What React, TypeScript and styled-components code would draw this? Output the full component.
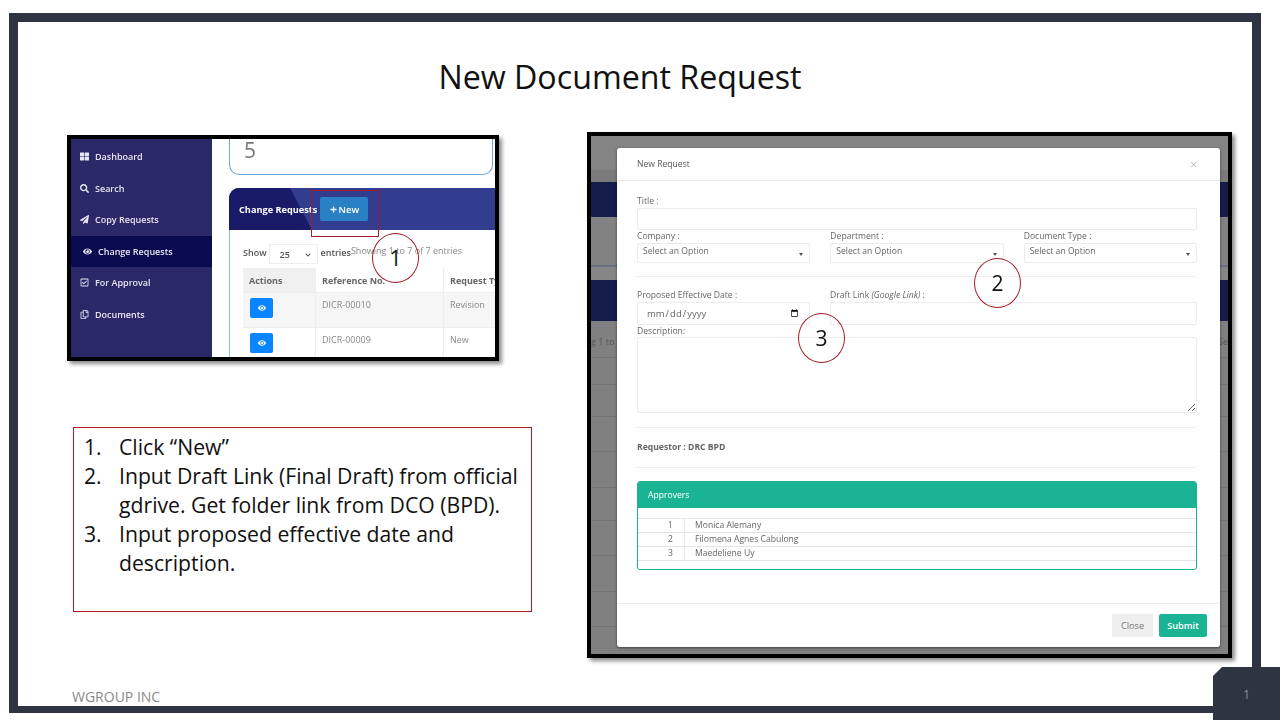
import { createGlobalStyle } from 'styled-components';
import styled from 'styled-components';
import { FaThLarge, FaSearch, FaPaperPlane, FaEye, FaRegCheckSquare, FaRegCopy, FaPlus, FaChevronDown } from 'react-icons/fa';

const GlobalStyle = createGlobalStyle`
    html, body {
        margin: 0;
        padding: 0;
        background: #fff;
    }
    * {
        box-sizing: border-box;
    }
`;

const Page = styled.div`
    width: 1280px;
    height: 720px;
    position: relative;
    overflow: hidden;
    background: #fff;
    padding: 13px 19px 7px 9px;
    font-family: "Open Sans", "Liberation Sans", sans-serif;
`;

const Frame = styled.div`
    height: 100%;
    border: solid #2f3443;
    border-width: 9px 9px 7px 9px;
    display: flex;
    flex-direction: column;
`;

const Title = styled.h1`
    height: 110px;
    margin: 0;
    padding: 36px 30px 0 0;
    text-align: center;
    font-size: 32.2px;
    line-height: 38px;
    font-weight: 400;
    color: #111;
`;

const Body = styled.div`
    display: flex;
    padding-left: 49px;
    gap: 56px;
`;

const LeftColumn = styled.div`
    width: 464px;
    padding-top: 3px;
`;

const Shot = styled.div`
    border: 4px solid #000;
    box-shadow: 3px 3px 4px rgba(0, 0, 0, 0.45);
    overflow: hidden;
    position: relative;
`;

const AppShot = styled(Shot)`
    width: 432px;
    height: 226px;
    display: flex;
    filter: blur(0.3px);
`;

const Sidebar = styled.nav`
    width: 141px;
    flex: none;
    background: #2b2868;
    padding-top: 2px;
`;

const NavItem = styled.div<{ $active?: boolean; $indent: number }>`
    height: 31.5px;
    display: flex;
    align-items: center;
    gap: 6px;
    padding-left: ${(p) => p.$indent}px;
    background: ${(p) => (p.$active ? '#0a0a50' : 'transparent')};
    color: #e6e6f2;
    font-size: 9px;
    font-weight: 600;
    svg {
        width: 9px;
        height: 9px;
        flex: none;
    }
`;

const AppMain = styled.div`
    flex: 1;
    min-width: 0;
    overflow: hidden;
    background: #fff;
    padding-left: 17px;
`;

const CountCard = styled.div`
    width: 264px;
    height: 36px;
    border: 1px solid #6aa9dd;
    border-top: none;
    border-radius: 0 0 10px 10px;
    padding-left: 14px;
    font-size: 21px;
    line-height: 23px;
    color: #777;
`;

const ListCard = styled.div`
    width: 300px;
    margin-top: 13px;
    border: 1px solid #8dbce4;
    border-radius: 10px 10px 0 0;
    height: 200px;
`;

const ListHeader = styled.div`
    height: 42px;
    margin: -1px -1px 0;
    background: #333d8f;
    border-radius: 10px 0 0 0;
    display: flex;
    align-items: center;
    padding-left: 10px;
    gap: 3px;
    position: relative;
    overflow: hidden;
    color: #fff;
    font-size: 9.2px;
    font-weight: 700;
    &::before {
        content: '';
        position: absolute;
        left: 0;
        top: 0;
        width: 83px;
        height: 100%;
        background: #191a68;
        clip-path: polygon(0 0, 61px 0, 83px 100%, 0 100%);
    }
    span, button {
        position: relative;
    }
`;

const NewButton = styled.button`
    width: 48px;
    height: 24px;
    border: none;
    border-radius: 2px;
    background: #2a80c4;
    color: #fff;
    font-family: inherit;
    font-size: 9.5px;
    font-weight: 600;
    padding: 0;
    display: flex;
    align-items: center;
    justify-content: center;
    gap: 2px;
    svg {
        width: 7px;
        height: 7px;
    }
`;

const ListBody = styled.div`
    padding: 14px 0 0 13px;
`;

const ShowRow = styled.div`
    height: 24px;
    display: flex;
    align-items: flex-start;
    font-size: 9px;
    font-weight: 600;
    color: #555;
    line-height: 18px;
`;

const EntriesSelect = styled.div`
    width: 49px;
    height: 20px;
    margin: 0 3px 0 2px;
    border: 1px solid #eee;
    padding: 2px 6px 0 10px;
    display: flex;
    justify-content: space-between;
    align-items: center;
    svg {
        width: 6px;
        height: 6px;
    }
`;

const ShowingText = styled.span`
    font-weight: 400;
    color: #888;
    line-height: 14px;
`;

const TableRow = styled.div<{ $height: number; $shade?: boolean }>`
    height: ${(p) => p.$height}px;
    display: grid;
    grid-template-columns: 73px 128px 1fr;
    background: ${(p) => (p.$shade ? '#f6f6f6' : '#fff')};
    border-bottom: 1px solid #eee;
    font-size: 9px;
    color: #888;
`;

const HeadCell = styled.div<{ $shade?: boolean }>`
    padding: 6px 0 0 6px;
    font-weight: 700;
    color: #666;
    white-space: nowrap;
    background: ${(p) => (p.$shade ? '#f0f0f0' : 'transparent')};
    border-right: 1px solid #eee;
`;

const Cell = styled.div`
    padding: 5px 0 0 6px;
    border-right: 1px solid #eee;
`;

const EyeButton = styled.span`
    width: 23px;
    height: 20px;
    margin-left: 1px;
    border-radius: 2px;
    background: #0a84ff;
    color: #fff;
    display: flex;
    align-items: center;
    justify-content: center;
    svg {
        width: 8px;
        height: 8px;
    }
`;

const StepBox = styled.div`
    width: 459px;
    height: 185px;
    margin: 66px 0 0 6px;
    border: 1px solid #a81c22;
    padding: 4px 0 0 10px;
    font-size: 21.2px;
    line-height: 29px;
    color: #111;
`;

const Step = styled.div`
    display: flex;
`;

const StepNumber = styled.span`
    width: 35px;
    flex: none;
`;

const ModalShot = styled(Shot)`
    width: 645px;
    height: 526px;
    background: #808080;
`;

const Backdrop = styled.div`
    height: 100%;
    filter: blur(0.4px);
    font-size: 9px;
    color: #555;
`;

const Band = styled.div<{ $height: number; $color: string }>`
    height: ${(p) => p.$height}px;
    background: ${(p) => p.$color};
`;

const BackdropRow = styled.div<{ $height: number }>`
    height: ${(p) => p.$height}px;
    border-bottom: 1px solid #747474;
    display: flex;
    justify-content: space-between;
    padding-top: 14px;
    white-space: nowrap;
`;

const Modal = styled.div`
    position: absolute;
    left: 26px;
    top: 12px;
    width: 603px;
    height: 499px;
    background: #fff;
    border-radius: 3px;
    box-shadow: 0 1px 3px rgba(0, 0, 0, 0.5);
    color: #666;
    font-size: 8.6px;
    display: flex;
    flex-direction: column;
    filter: blur(0.25px);
`;

const ModalHeader = styled.div`
    height: 33px;
    flex: none;
    border-bottom: 1px solid #ececec;
    padding: 0 23px 0 20px;
    display: flex;
    align-items: center;
    justify-content: space-between;
    color: #555;
`;

const CloseMark = styled.span`
    font-size: 12px;
    color: #bbb;
`;

const ModalBody = styled.div`
    flex: 1;
    padding: 14px 23px 0 20px;
`;

const Label = styled.div`
    height: 13px;
    line-height: 13px;
    white-space: nowrap;
`;

const DescriptionLabel = styled(Label)`
    height: 12px;
    line-height: 12px;
`;

const TextInput = styled.input`
    display: block;
    width: 100%;
    height: 22px;
    border: 1px solid #ececec;
    border-radius: 2px;
    background: #fff;
`;

const Columns = styled.div<{ $columns: string }>`
    display: grid;
    grid-template-columns: ${(p) => p.$columns};
    column-gap: 20px;
`;

const SelectBox = styled.div`
    height: 20px;
    border: 1px solid #ececec;
    border-radius: 2px;
    padding: 0 6px 3px 5px;
    display: flex;
    align-items: center;
    justify-content: space-between;
    line-height: 15px;
    &::after {
        content: '';
        margin: 5px 0 0;
        border: solid transparent;
        border-width: 3px 2.5px 0;
        border-top-color: #555;
    }
`;

const DateInput = styled.input`
    display: block;
    width: 100%;
    height: 23px;
    border: 1px solid #ececec;
    border-radius: 2px;
    padding: 0 8px;
    font-family: inherit;
    font-size: 9.5px;
    color: #666;
    background: #fff;
`;

const LinkInput = styled(TextInput)`
    height: 23px;
`;

const DescriptionArea = styled.textarea`
    display: block;
    width: 100%;
    height: 76px;
    border: 1px solid #ececec;
    border-radius: 2px;
    background: #fff;
`;

const Rule = styled.div<{ $top: number; $bottom: number }>`
    height: 1px;
    background: #eee;
    margin: ${(p) => p.$top}px 0 ${(p) => p.$bottom}px;
`;

const Requestor = styled.div`
    height: 12px;
    line-height: 12px;
    font-weight: 700;
    color: #666;
`;

const ApproverPanel = styled.div`
    height: 89px;
    border: 1px solid #1ab394;
    border-radius: 3px;
    overflow: hidden;
`;

const ApproverHeader = styled.div`
    height: 26px;
    margin-bottom: 10px;
    background: #1ab394;
    color: #fff;
    padding-left: 10px;
    line-height: 26px;
`;

const ApproverRow = styled.div`
    height: 14px;
    display: grid;
    grid-template-columns: 47px 1fr;
    border-top: 1px solid #e4e4e4;
    line-height: 13px;
    &:last-child {
        border-bottom: 1px solid #e4e4e4;
        height: 15px;
    }
`;

const ApproverNumber = styled.span`
    text-align: right;
    padding-right: 11px;
    border-right: 1px solid #e4e4e4;
`;

const ApproverName = styled.span`
    padding-left: 10px;
`;

const ModalFooter = styled.div`
    height: 44px;
    flex: none;
    border-top: 1px solid #ececec;
    padding: 10px 13px 0 0;
    display: flex;
    justify-content: flex-end;
    gap: 6px;
`;

const FooterButton = styled.button<{ $primary?: boolean }>`
    height: 23px;
    width: ${(p) => (p.$primary ? 48 : 41)}px;
    border: none;
    border-radius: 2px;
    padding: 0;
    background: ${(p) => (p.$primary ? '#1ab394' : '#efefef')};
    color: ${(p) => (p.$primary ? '#fff' : '#777')};
    font-family: inherit;
    font-size: 9.2px;
    font-weight: ${(p) => (p.$primary ? 600 : 400)};
`;

const FooterNote = styled.div`
    margin-top: auto;
    height: 18px;
    padding-left: 54px;
    font-size: 14px;
    line-height: 18px;
    color: #8a8a8a;
`;

const CornerTab = styled.div`
    position: absolute;
    left: 1213px;
    top: 667px;
    width: 67px;
    height: 53px;
    background: #2f3443;
    clip-path: polygon(9px 0, 100% 0, 100% 100%, 0 100%, 0 9px);
    color: #8b8e9a;
    font-size: 12.5px;
    line-height: 56px;
    text-align: center;
`;

const Callout = styled.div<{ $left: number; $top: number }>`
    position: absolute;
    left: ${(p) => p.$left}px;
    top: ${(p) => p.$top}px;
    width: 47px;
    height: 50px;
    border: 1px solid #a01c28;
    border-radius: 50%;
    display: flex;
    align-items: center;
    justify-content: center;
    font-size: 21px;
    color: #111;
`;

const Highlight = styled.div`
    position: absolute;
    left: 311px;
    top: 190px;
    width: 68px;
    height: 47px;
    border: 1px solid #a01c28;
`;

const navItems = [
    { label: 'Dashboard', icon: <FaThLarge />, indent: 9 },
    { label: 'Search', icon: <FaSearch />, indent: 9 },
    { label: 'Copy Requests', icon: <FaPaperPlane />, indent: 9 },
    { label: 'Change Requests', icon: <FaEye />, indent: 12, active: true },
    { label: 'For Approval', icon: <FaRegCheckSquare />, indent: 9 },
    { label: 'Documents', icon: <FaRegCopy />, indent: 9 },
];

const approvers = ['Monica Alemany', 'Filomena Agnes Cabulong', 'Maedeliene Uy'];

const documents = [
    { ref: 'DICR-00010', type: 'Revision', shade: true },
    { ref: 'DICR-00009', type: 'New', shade: false },
];

const backdropRows = [37, 27, 32, 35, 36, 33, 35, 36, 35];

function App() {
    return (
        <Page>
            <GlobalStyle />
            <Frame>
                <Title>New Document Request</Title>
                <Body>
                    <LeftColumn>
                        <AppShot>
                            <Sidebar>
                                {navItems.map((item) => (
                                    <NavItem key={item.label} $active={item.active} $indent={item.indent}>
                                        {item.icon}
                                        {item.label}
                                    </NavItem>
                                ))}
                            </Sidebar>
                            <AppMain>
                                <CountCard>5</CountCard>
                                <ListCard>
                                    <ListHeader>
                                        <span>Change Requests</span>
                                        <NewButton><FaPlus />New</NewButton>
                                    </ListHeader>
                                    <ListBody>
                                        <ShowRow>
                                            Show
                                            <EntriesSelect>25<FaChevronDown /></EntriesSelect>
                                            entries
                                            <ShowingText>Showing 1 to 7 of 7 entries</ShowingText>
                                        </ShowRow>
                                        <TableRow $height={25}>
                                            <HeadCell $shade>Actions</HeadCell>
                                            <HeadCell>Reference No.</HeadCell>
                                            <HeadCell>Request Type</HeadCell>
                                        </TableRow>
                                        {documents.map((doc) => (
                                            <TableRow key={doc.ref} $height={35} $shade={doc.shade}>
                                                <Cell><EyeButton><FaEye /></EyeButton></Cell>
                                                <Cell>{doc.ref}</Cell>
                                                <Cell>{doc.type}</Cell>
                                            </TableRow>
                                        ))}
                                    </ListBody>
                                </ListCard>
                            </AppMain>
                        </AppShot>
                        <StepBox>
                            <Step><StepNumber>1.</StepNumber><span>Click “New”</span></Step>
                            <Step><StepNumber>2.</StepNumber><span>Input Draft Link (Final Draft) from official gdrive. Get folder link from DCO (BPD).</span></Step>
                            <Step><StepNumber>3.</StepNumber><span>Input proposed effective date and description.</span></Step>
                        </StepBox>
                    </LeftColumn>
                    <ModalShot>
                        <Backdrop>
                            <Band $height={34} $color="#848484" />
                            <Band $height={12} $color="#7b7b7b" />
                            <Band $height={35} $color="#161d4c" />
                            <Band $height={48} $color="#828282" />
                            <Band $height={2} $color="#687080" />
                            <Band $height={13} $color="#868686" />
                            <Band $height={41} $color="#161d4c" />
                            {backdropRows.map((height, i) => (
                                <BackdropRow key={i} $height={height}>
                                    {i === 0 && <span>g 1 to :</span>}
                                    {i === 0 && <span>Se</span>}
                                </BackdropRow>
                            ))}
                        </Backdrop>
                        <Modal>
                            <ModalHeader>
                                New Request
                                <CloseMark>×</CloseMark>
                            </ModalHeader>
                            <ModalBody>
                                <Label>Title :</Label>
                                <TextInput />
                                <Columns $columns="1fr 1fr 1fr">
                                    <div><Label>Company :</Label><SelectBox>Select an Option</SelectBox></div>
                                    <div><Label>Department :</Label><SelectBox>Select an Option</SelectBox></div>
                                    <div><Label>Document Type :</Label><SelectBox>Select an Option</SelectBox></div>
                                </Columns>
                                <Rule $top={13} $bottom={12} />
                                <Columns $columns="173px 1fr">
                                    <div><Label>Proposed Effective Date :</Label><DateInput type="date" /></div>
                                    <div><Label>Draft Link <i>(Google Link)</i> :</Label><LinkInput /></div>
                                </Columns>
                                <DescriptionLabel>Description:</DescriptionLabel>
                                <DescriptionArea />
                                <Rule $top={14} $bottom={13} />
                                <Requestor>Requestor : DRC BPD</Requestor>
                                <Rule $top={14} $bottom={13} />
                                <ApproverPanel>
                                    <ApproverHeader>Approvers</ApproverHeader>
                                    {approvers.map((name, i) => (
                                        <ApproverRow key={name}>
                                            <ApproverNumber>{i + 1}</ApproverNumber>
                                            <ApproverName>{name}</ApproverName>
                                        </ApproverRow>
                                    ))}
                                </ApproverPanel>
                            </ModalBody>
                            <ModalFooter>
                                <FooterButton>Close</FooterButton>
                                <FooterButton $primary>Submit</FooterButton>
                            </ModalFooter>
                        </Modal>
                    </ModalShot>
                </Body>
                <FooterNote>WGROUP INC</FooterNote>
            </Frame>
            <CornerTab>1</CornerTab>
            <Highlight />
            <Callout $left={372} $top={233}>1</Callout>
            <Callout $left={974} $top={258}>2</Callout>
            <Callout $left={798} $top={313}>3</Callout>
        </Page>
    );
}

export default App;
